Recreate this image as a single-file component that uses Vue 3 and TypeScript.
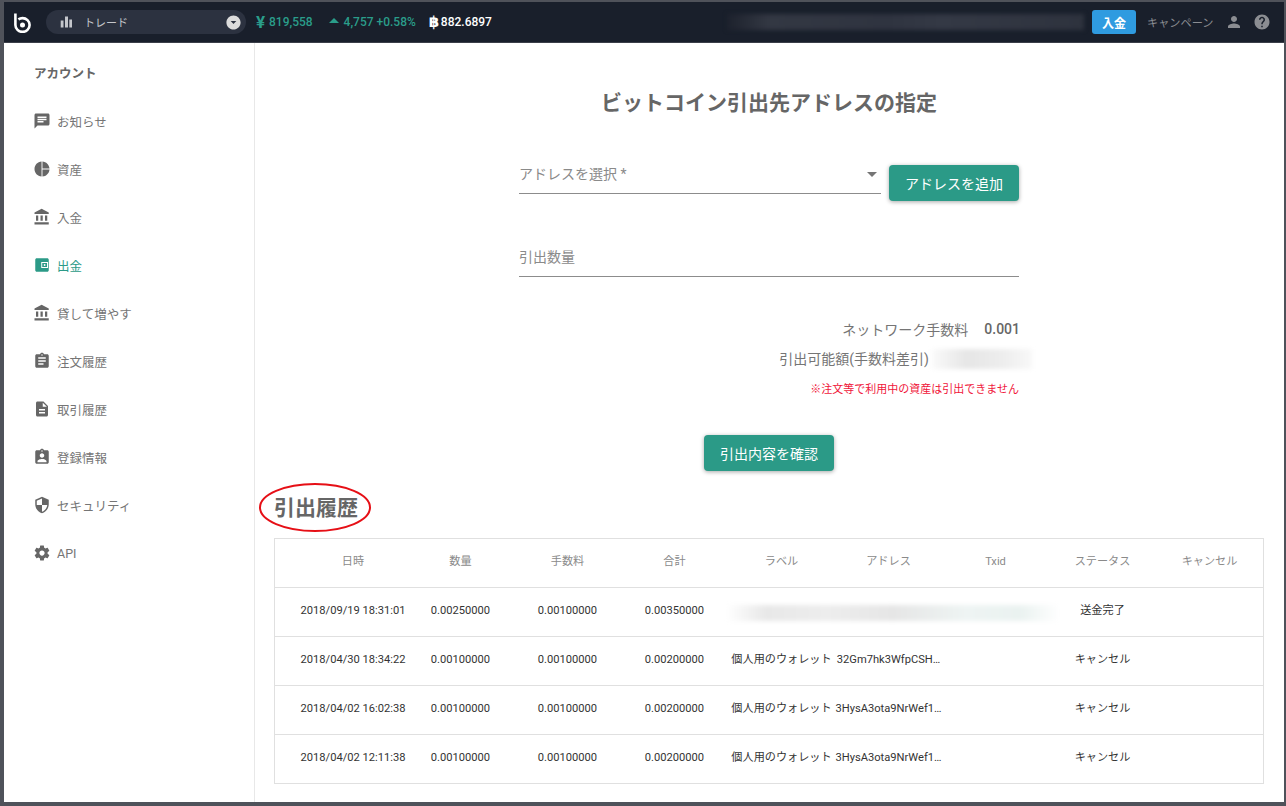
<script setup lang="ts">
const nav = [
  { label: 'お知らせ', d: 'M20 2H4c-1.1 0-1.99.9-1.99 2L2 22l4-4h14c1.1 0 2-.9 2-2V4c0-1.1-.9-2-2-2zM6 9h12v2H6V9zm8 5H6v-2h8v2zm4-6H6V6h12v2z' },
  { label: '資産', d: 'M11.4 2v20c-5.3-.3-9.4-4.7-9.4-10s4.1-9.7 9.4-10zm1.2 0v9.4H22c-.3-5-4.4-9.1-9.4-9.4zm0 10.6V22c5-.3 9.1-4.4 9.4-9.4h-9.4z' },
  { label: '入金', d: 'M4 10v7h3v-7H4zm6 0v7h3v-7h-3zM2 22h19v-3H2v3zm14-12v7h3v-7h-3zm-4.5-9L2 6v2h19V6l-9.5-5z' },
  { label: '出金', active: true, rule: 'evenodd', d: 'M5 3h14c1.1 0 2 .9 2 2v14c0 1.1-.9 2-2 2H5c-1.1 0-2-.9-2-2V5c0-1.1.9-2 2-2zm6 5v8h9V8h-9zm1.3 1.2h6.4v5.6h-6.4V9.200zm3.200 1.600a1.200 1.200 0 1 0 0 2.400 1.200 1.200 0 0 0 0-2.400z' },
  { label: '貸して増やす', d: 'M4 10v7h3v-7H4zm6 0v7h3v-7h-3zM2 22h19v-3H2v3zm14-12v7h3v-7h-3zm-4.5-9L2 6v2h19V6l-9.5-5z' },
  { label: '注文履歴', d: 'M19 3h-4.18C14.4 1.84 13.3 1 12 1c-1.3 0-2.4.84-2.82 2H5c-1.1 0-2 .9-2 2v14c0 1.1.9 2 2 2h14c1.1 0 2-.9 2-2V5c0-1.1-.9-2-2-2zm-7 0c.55 0 1 .45 1 1s-.45 1-1 1-1-.45-1-1 .45-1 1-1zm2 14H7v-2h7v2zm3-4H7v-2h10v2zm0-4H7V7h10v2z' },
  { label: '取引履歴', d: 'M14 2H6c-1.1 0-1.99.9-1.99 2L4 20c0 1.1.89 2 1.99 2H18c1.1 0 2-.9 2-2V8l-6-6zm2 16H8v-2h8v2zm0-4H8v-2h8v2zm-3-5V3.5L18.5 9H13z' },
  { label: '登録情報', d: 'M19 3h-4.18C14.4 1.84 13.3 1 12 1c-1.3 0-2.4.84-2.82 2H5c-1.1 0-2 .9-2 2v14c0 1.1.9 2 2 2h14c1.1 0 2-.9 2-2V5c0-1.1-.9-2-2-2zm-7 0c.55 0 1 .45 1 1s-.45 1-1 1-1-.45-1-1 .45-1 1-1zm0 4c1.66 0 3 1.34 3 3s-1.34 3-3 3-3-1.34-3-3 1.34-3 3-3zm6 12H6v-1.4c0-2 4-3.1 6-3.1s6 1.1 6 3.1V19z' },
  { label: 'セキュリティ', d: 'M12 1L3 5v6c0 5.55 3.84 10.74 9 12 5.16-1.26 9-6.45 9-12V5l-9-4zm0 10.99h7c-.53 4.12-3.28 7.79-7 8.94V12H5V6.3l7-3.11v8.8z' },
  { label: 'API', d: 'M19.43 12.98c.04-.32.07-.64.07-.98s-.03-.66-.07-.98l2.11-1.65c.19-.15.24-.42.12-.64l-2-3.46c-.12-.22-.39-.3-.61-.22l-2.49 1c-.52-.4-1.08-.73-1.69-.98l-.38-2.65C14.46 2.18 14.25 2 14 2h-4c-.25 0-.46.18-.49.42l-.38 2.65c-.61.25-1.17.59-1.69.98l-2.49-1c-.23-.09-.49 0-.61.22l-2 3.46c-.13.22-.07.49.12.64l2.11 1.65c-.04.32-.07.65-.07.98s.03.66.07.98l-2.11 1.65c-.19.15-.24.42-.12.64l2 3.46c.12.22.39.3.61.22l2.49-1c.52.4 1.08.73 1.69.98l.38 2.65c.03.24.24.42.49.42h4c.25 0 .46-.18.49-.42l.38-2.65c.61-.25 1.17-.59 1.69-.98l2.49 1c.23.09.49 0 .61-.22l2-3.46c.12-.22.07-.49-.12-.64l-2.11-1.65zM12 15.5c-1.93 0-3.5-1.57-3.5-3.5s1.57-3.5 3.5-3.5 3.5 1.57 3.5 3.5-1.57 3.5-3.5 3.5z' },
]
const headers = ['日時', '数量', '手数料', '合計', 'ラベル', 'アドレス', 'Txid', 'ステータス', 'キャンセル']
const rows = [
  { date: '2018/04/30 18:34:22', address: '32Gm7hk3WfpCSH…' },
  { date: '2018/04/02 16:02:38', address: '3HysA3ota9NrWef1…' },
  { date: '2018/04/02 12:11:38', address: '3HysA3ota9NrWef1…' },
]
</script>

<template>
  <div class="frame">
    <div class="shell">
      <header class="topbar">
        <svg class="logo" viewBox="0 0 17 20" width="17" height="20" aria-label="bitbank">
          <path d="M1.4 0.5V12a7.1 6.9 0 1 0 7.1-6.9c-1.6 0-3 .5-4.1 1.3" fill="none" stroke="#fff" stroke-width="2.6" />
          <circle cx="8.5" cy="12" r="2.5" fill="#fff" />
        </svg>
        <div class="pill">
          <svg class="pill-icon" viewBox="0 0 12 12" width="12" height="12"><path d="M.7 4.500h2.800V11.500H.7zM5 .5h3v11H5zM9.300 3.500H12v8H9.300z" fill="#c4c6cb" /></svg>
          <span class="pill-text">トレード</span>
          <svg class="pill-arrow" viewBox="0 0 24 24" width="17" height="17"><path d="M12 2C6.48 2 2 6.48 2 12s4.48 10 10 10 10-4.48 10-10S17.520 2 12 2zm0 12l-4-4h8l-4 4z" fill="#dcdcdc" /></svg>
        </div>
        <span class="yen">¥</span><span class="stat teal">819,558</span>
        <svg class="up" viewBox="0 0 10 5" width="10" height="5"><path d="M0 5l5-5 5 5z" fill="#2a9d8a" /></svg>
        <span class="stat teal change">4,757 +0.58%</span>
        <span class="baht">฿</span><span class="stat white">882.6897</span>
        <div class="blur-head"></div>
        <button class="deposit">入金</button>
        <span class="campaign">キャンペーン</span>
        <svg class="person" viewBox="0 0 24 24" width="18" height="18"><path d="M12 12c2.21 0 4-1.79 4-4s-1.79-4-4-4-4 1.79-4 4 1.79 4 4 4zm0 2c-2.67 0-8 1.34-8 4v2h16v-2c0-2.66-5.33-4-8-4z" fill="#8b8d92" /></svg>
        <svg class="help" viewBox="0 0 24 24" width="18" height="18"><path d="M12 2C6.48 2 2 6.48 2 12s4.48 10 10 10 10-4.48 10-10S17.52 2 12 2zm1 17h-2v-2h2v2zm2.07-7.75l-.9.92C13.45 12.9 13 13.5 13 15h-2v-.5c0-1.1.45-2.1 1.17-2.83l1.24-1.26c.37-.36.59-.86.59-1.41 0-1.1-.9-2-2-2s-2 .9-2 2H8c0-2.21 1.79-4 4-4s4 1.79 4 4c0 .88-.36 1.68-.93 2.25z" fill="#8b8d92" /></svg>
      </header>

      <div class="body">
        <aside class="sidebar">
          <div class="side-title">アカウント</div>
          <a v-for="item in nav" :key="item.label" class="nav-item" :class="{ active: item.active }">
            <svg viewBox="0 0 24 24" width="18" height="18"><path :d="item.d" :fill-rule="item.rule" fill="currentColor" /></svg>
            <span>{{ item.label }}</span>
          </a>
        </aside>

        <main class="main">
          <h1 class="title">ビットコイン引出先アドレスの指定</h1>
          <div class="form">
            <div class="select-row">
              <div class="field select">
                <span>アドレスを選択 *</span>
                <svg viewBox="0 0 10 5" width="10" height="5"><path d="M0 0l5 5 5-5z" fill="#757575" /></svg>
              </div>
              <button class="btn add">アドレスを追加</button>
            </div>
            <div class="field amount"><span>引出数量</span></div>
            <div class="info fee"><span>ネットワーク手数料</span><b>0.001</b></div>
            <div class="info avail"><span>引出可能額(手数料差引)</span><i class="blur-avail"></i></div>
            <div class="info note"><span>※注文等で利用中の資産は引出できません</span></div>
          </div>
          <button class="btn confirm">引出内容を確認</button>

          <div class="history-head">
            <h2>引出履歴</h2>
            <svg class="circle" viewBox="0 0 112 49" width="112" height="49"><ellipse cx="56" cy="24.5" rx="55" ry="23.5" fill="none" stroke="#e60f16" stroke-width="2" /></svg>
          </div>

          <div class="table">
            <div class="row head">
              <div v-for="h in headers" :key="h" class="cell">{{ h }}</div>
            </div>
            <div class="row">
              <div class="cell">2018/09/19 18:31:01</div>
              <div class="cell">0.00250000</div>
              <div class="cell">0.00100000</div>
              <div class="cell">0.00350000</div>
              <div class="blur-row"></div>
              <div class="cell">送金完了</div>
              <div class="cell"></div>
            </div>
            <div v-for="r in rows" :key="r.date" class="row">
              <div class="cell">{{ r.date }}</div>
              <div class="cell">0.00100000</div>
              <div class="cell">0.00100000</div>
              <div class="cell">0.00200000</div>
              <div class="cell nowrap">個人用のウォレット</div>
              <div class="cell nowrap">{{ r.address }}</div>
              <div class="cell"></div>
              <div class="cell">キャンセル</div>
              <div class="cell"></div>
            </div>
          </div>
        </main>
      </div>
    </div>
  </div>
</template>

<style>
html, body { margin: 0; background: #4f525a; }
</style>

<style scoped>
.frame {
  box-sizing: border-box;
  width: 1286px;
  height: 806px;
  padding: 2px 2px 4px 4px;
  background: #4f525a;
  font-family: Roboto, "Noto Sans CJK JP", sans-serif;
  overflow: hidden;
}
.shell {
  height: 100%;
  display: flex;
  flex-direction: column;
  background: #fff;
}
.topbar {
  flex: none;
  box-sizing: border-box;
  height: 41px;
  display: flex;
  align-items: center;
  background: #191f2b;
  border-bottom: 1px solid #3b3f49;
  padding-left: 10px;
  white-space: nowrap;
}
.logo { flex: none; margin-top: 1px; }
.pill {
  flex: none;
  width: 200px;
  height: 24px;
  margin-left: 15px;
  border-radius: 12px;
  background: #2c3240;
  display: flex;
  align-items: center;
}
.pill-icon { margin-left: 14px; }
.pill-text {
  margin-left: 12px;
  font-size: 11px;
  color: #c4c6cb;
}
.pill-arrow { margin-left: auto; margin-right: 4px; }
.yen { margin-left: 10px; font-size: 17px; font-weight: 700; line-height: 20px; color: #2a9d8a; width: 13px; }
.stat { font-size: 12px; font-weight: 500; }
.teal { color: #2a9d8a; }
.white { color: #fff; }
.up { margin-left: 16px; margin-bottom: 3px; }
.change { margin-left: 5px; }
.baht { margin-left: 13px; font-size: 15px; line-height: 20px; font-weight: 700; color: #fff; font-family: "DejaVu Sans", sans-serif; width: 12px; }
.blur-head {
  width: 357px;
  height: 16px;
  margin-left: 235px;
  background: linear-gradient(90deg, #1d222d 0%, #333843 12%, #2f3440 45%, #343945 60%, #2e333e 100%);
  filter: blur(2px);
}
.deposit {
  flex: none;
  width: 44px;
  height: 24px;
  margin-left: 8px;
  border: 0;
  border-radius: 3px;
  background: #2f9be0;
  color: #fff;
  font: 700 12px Roboto, "Noto Sans CJK JP", sans-serif;
  padding: 0;
}
.campaign { margin-left: 11px; font-size: 11.2px; color: #8b8d92; }
.person { margin-left: 11px; }
.help { margin-left: 10px; }

.body { flex: 1; min-height: 0; display: flex; }
.sidebar {
  flex: none;
  box-sizing: border-box;
  width: 251px;
  border-right: 1px solid #e8e8e8;
  padding: 16px 0 0 29px;
}
.side-title {
  height: 30px;
  line-height: 30px;
  font-size: 12.5px;
  font-weight: 700;
  color: #666;
  padding-left: 1px;
  margin-bottom: 8px;
}
.nav-item {
  display: flex;
  align-items: center;
  gap: 6px;
  height: 48px;
  color: #666;
  font-size: 12.5px;
}
.nav-item span { color: #757575; }
.nav-item.active, .nav-item.active span { color: #2b9a87; }

.main {
  flex: 1;
  min-width: 0;
  padding: 45px 20px 0 19px;
  display: flex;
  flex-direction: column;
}
.title {
  margin: 0;
  height: 30px;
  line-height: 30px;
  text-align: center;
  font-size: 21px;
  font-weight: 700;
  color: #666;
}
.form { width: 500px; margin: 47px auto 0; }
.select-row { display: flex; justify-content: space-between; align-items: flex-start; }
.field {
  box-sizing: border-box;
  height: 29px;
  border-bottom: 1px solid #8c8c8c;
  font-size: 14px;
  line-height: 18px;
  color: #8a8a8a;
  display: flex;
  align-items: flex-start;
  justify-content: space-between;
}
.select { width: 362px; }
.select svg { margin: 7px 4px 0 0; }
.amount { margin-top: 47px; }
.btn {
  border: 0;
  border-radius: 4px;
  width: 130px;
  height: 36px;
  padding: 0;
  background: #2b9a87;
  color: #fff;
  font: 400 14px Roboto, "Noto Sans CJK JP", sans-serif;
  box-shadow: 0 1px 4px rgba(0, 0, 0, .35);
}
.info {
  display: flex;
  justify-content: flex-end;
  align-items: center;
  height: 30px;
  font-size: 14px;
  color: #757575;
}
.fee { margin-top: 37px; }
.fee b { margin: 0 -1px 0 16px; font-weight: 500; color: #666; }
.avail span { margin-top: -2px; }
.blur-avail {
  flex: none;
  width: 100px;
  height: 20px;
  margin: 0 -13px 0 3px;
  background: linear-gradient(90deg, #fafafa 0%, #e6e6e6 35%, #ededed 70%, #f8f8f8 100%);
  filter: blur(2px);
}
.note { font-size: 11px; color: #f0163a; }
.note span { margin-top: -2px; }
.confirm { flex: none; display: block; margin: 31px auto 0; }
.history-head { position: relative; margin-top: 22px; height: 30px; }
.history-head h2 {
  margin: 0;
  line-height: 30px;
  font-size: 21px;
  font-weight: 700;
  color: #666;
}
.circle { position: absolute; left: -15px; top: -10px; }
.table {
  margin-top: 15px;
  border: 1px solid #e0e0e0;
  border-bottom: 0;
}
.row {
  box-sizing: border-box;
  height: 49px;
  padding: 0 0 2px 24px;
  display: grid;
  grid-template-columns: 108px repeat(8, 107px);
  align-items: center;
  border-bottom: 1px solid #e0e0e0;
  font-size: 11.15px;
  line-height: 16px;
  color: #333;
}
.cell { text-align: center; min-height: 16px; }
.nowrap { white-space: nowrap; }
.head { color: #8a8a8a; }
.blur-row {
  grid-column: 5 / 8;
  height: 16px;
  margin: 3px -11px 0 -2px;
  background: linear-gradient(90deg, #fff 0%, #e8e8e8 12%, #ededed 30%, #e6e6e6 50%, #eef4f3 72%, #eaf2f0 88%, #fff 100%);
  filter: blur(2px);
}
</style>
